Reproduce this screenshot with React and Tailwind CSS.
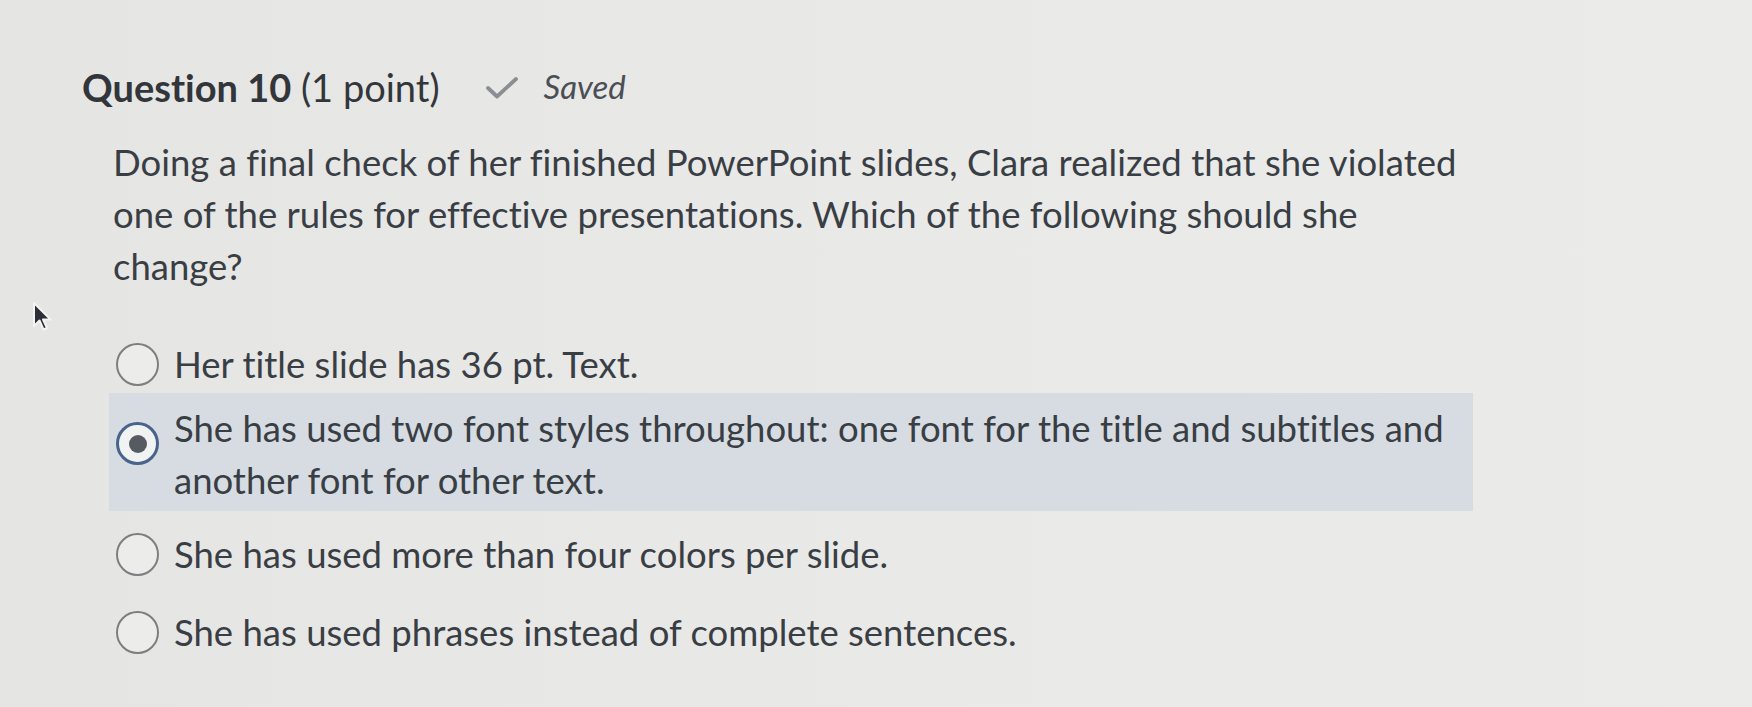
import React from "react";

function Radio({ selected }) {
  if (selected) {
    return (
      <div className="w-[43px] h-[43px] shrink-0 rounded-full border-[3px] border-[#48638c] bg-[#f1f2f2] flex items-center justify-center">
        <div className="w-[18px] h-[18px] rounded-full bg-[#565b62]" />
      </div>
    );
  }
  return <div className="w-[43px] h-[43px] shrink-0 rounded-full border-2 border-[#7d7e80] bg-[#ececea]" />;
}

function Cursor() {
  return (
    <svg className="absolute left-[31px] top-[301px]" width="22" height="32" viewBox="0 0 22 32">
      <path
        d="M3 2 L3 25 L8.5 19.5 L12.5 28.5 L16 27 L12 18.5 L19.5 18.5 Z"
        fill="#2c3036"
        stroke="#f4f4f4"
        strokeWidth="2"
        strokeLinejoin="round"
      />
    </svg>
  );
}

export default function App() {
  return (
    <div
      className="relative w-full min-h-[707px] bg-gradient-to-r from-[#e5e5e3] via-[#e9e9e7] to-[#ebebe9] text-[#393e45] pl-[82px] pt-[65px] [font-variant-ligatures:none]"
      style={{ fontFamily: "Lato, 'Noto Sans', sans-serif" }}
    >
      <Cursor />
      <div className="flex items-center h-[44px]">
        <h2 className="text-[38px] leading-[44px] text-[#32363b] whitespace-nowrap">
          <span className="font-bold">Question 10</span> (1 point)
        </h2>
        <svg className="ml-[45px] mt-[2px]" width="34" height="24" viewBox="0 0 34 24">
          <path d="M3 12 L12 20.5 L31 3" fill="none" stroke="#8b8e92" strokeWidth="3.8" strokeLinecap="round" strokeLinejoin="round" />
        </svg>
        <span className="ml-[25px] text-[33px] italic text-[#4a4e55]">Saved</span>
      </div>

      <p className="ml-[31px] mt-[27px] w-[1362px] text-[36.5px] leading-[52px]">
        Doing a final check of her finished PowerPoint slides, Clara realized that she violated one of the rules for effective presentations. Which of the following should she change?
      </p>

      <div className="ml-[27px] mt-[34px] w-[1364px] flex flex-col text-[36.5px] leading-[52px]">
        <div className="flex items-center gap-[15px] pl-[7px] pt-[12px] pb-[3px]">
          <Radio />
          <span>Her title slide has 36 pt. Text.</span>
        </div>
        <div className="flex items-start gap-[15px] pl-[7px] pr-[10px] pt-[9px] pb-[5px] bg-[#d6dce1]">
          <div className="mt-[20px]">
            <Radio selected />
          </div>
          <span className="flex-1">
            She has used two font styles throughout: one font for the title and subtitles and another font for other text.
          </span>
        </div>
        <div className="flex items-center gap-[15px] pl-[7px] pt-[17px] pb-[13px]">
          <Radio />
          <span>She has used more than four colors per slide.</span>
        </div>
        <div className="flex items-center gap-[15px] pl-[7px] pt-[13px]">
          <Radio />
          <span>She has used phrases instead of complete sentences.</span>
        </div>
      </div>
    </div>
  );
}
